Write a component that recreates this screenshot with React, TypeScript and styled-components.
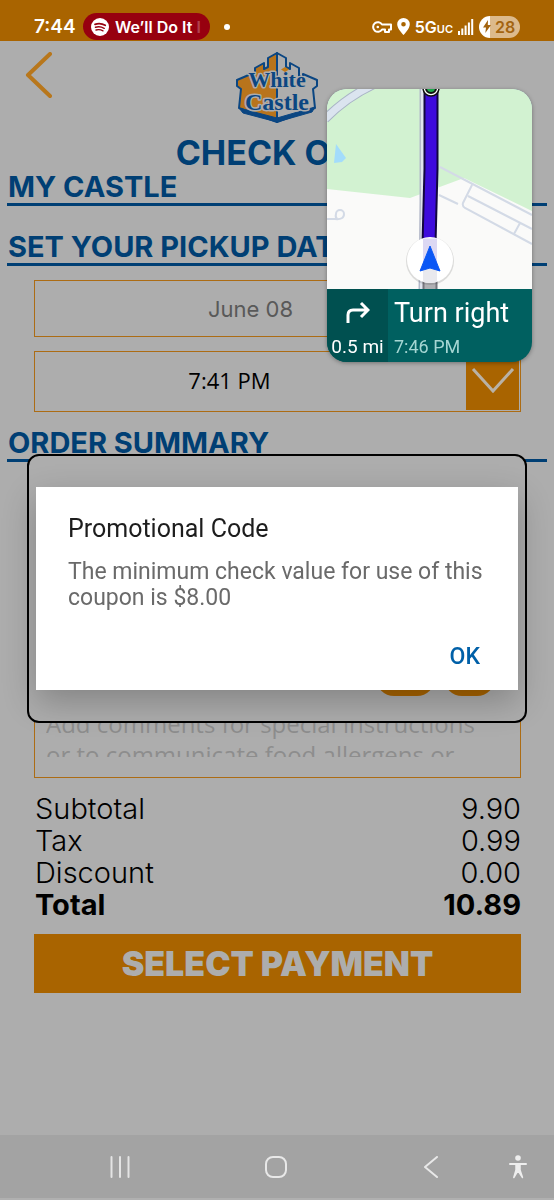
import React from "react";
import styled, { createGlobalStyle } from "styled-components";

const palette = {
  page: "#adadad",
  orange: "#a96400",
  line: "#ac6c14",
  blue: "#003f74",
  ink: "#060606",
};

const GlobalStyle = createGlobalStyle`
  *, *::before, *::after { box-sizing: border-box; }
  body { margin: 0; background: ${palette.page}; font-family: Inter, "Liberation Sans", sans-serif; }
  button, input, select, textarea { font: inherit; margin: 0; border-radius: 0; }
  button { border: 0; padding: 0; background: none; cursor: pointer; }
  svg { display: block; flex: none; }
`;

const Screen = styled.div`
  position: relative;
  display: flex;
  flex-direction: column;
  min-height: 100vh;
  background: ${palette.page};
  color: ${palette.ink};
`;

/* ---------- status bar ---------- */
const StatusBar = styled.div`
  display: flex;
  align-items: center;
  height: 41px;
  padding: 12px 34px 0 34px;
  background: ${palette.orange};
  color: #fff;
`;
const Clock = styled.span`
  width: 49px;
  font-size: 19px;
  line-height: 28px;
  font-weight: 600;
`;
const MediaPill = styled.div`
  display: flex;
  align-items: center;
  gap: 6px;
  width: 127px;
  height: 27px;
  padding-left: 8px;
  border-radius: 14px;
  background: #97000f;
  font-size: 16px;
  font-weight: 600;
  white-space: nowrap;
`;
const Faded = styled.span`
  opacity: 0.25;
`;
const Dot = styled.span`
  width: 6px;
  height: 6px;
  margin-left: 14px;
  border-radius: 50%;
  background: #fff;
`;
const StatusIcons = styled.div`
  display: flex;
  align-items: center;
  gap: 5px;
  margin-left: auto;
`;
const Network = styled.span`
  font-size: 16px;
  font-weight: 600;
  small { font-size: 11px; }
`;
const Battery = styled.span`
  display: flex;
  align-items: center;
  gap: 4px;
  width: 41px;
  height: 22px;
  padding-left: 4px;
  border-radius: 11px;
  background: linear-gradient(90deg, #fff 28%, #dcba8c 28%);
  color: #a36410;
  font-size: 16px;
  font-weight: 600;
`;

/* ---------- page header ---------- */
const Header = styled.header`
  display: grid;
  grid-template-columns: 60px 1fr 60px;
  height: 82px;
  padding-top: 11px;
`;
const BackButton = styled.button`
  display: flex;
  align-items: flex-start;
  padding-left: 25px;
`;
const Brand = styled.div`
  display: flex;
  justify-content: center;
`;
const PageTitle = styled.h1`
  margin: 11px 0 0;
  color: ${palette.blue};
  font-size: 34px;
  line-height: 37px;
  font-weight: 700;
  text-align: center;
`;

/* ---------- form ---------- */
const Main = styled.main`
  display: flex;
  flex: 1;
  flex-direction: column;
`;
const SectionTitle = styled.h2<{ $gap?: number }>`
  margin: ${(p) => p.$gap ?? 0}px 7px 0;
  padding-left: 1px;
  border-bottom: 3px solid ${palette.blue};
  color: ${palette.blue};
  font-size: 29px;
  line-height: 32px;
  font-weight: 700;
  white-space: nowrap;
`;
const Fields = styled.div`
  display: flex;
  flex-direction: column;
  gap: 14px;
  margin: 14px 33px 0 34px;
`;
const DateInput = styled.input`
  width: 100%;
  height: 57px;
  padding: 0 54px 0 0;
  border: 1px solid ${palette.line};
  background: transparent;
  color: #595959;
  font-size: 22px;
  text-align: center;
  outline: none;
`;
const TimeField = styled.div`
  display: flex;
  height: 61px;
  border: 1px solid ${palette.line};
`;
const TimeSelect = styled.select`
  flex: 1;
  min-width: 0;
  padding: 0 42px 3px 0;
  border: 0;
  appearance: none;
  background: transparent;
  color: #000;
  font-family: "Open Sans", sans-serif;
  font-size: 22px;
  text-align: center;
  text-align-last: center;
  outline: none;
`;
const SelectArrow = styled.span`
  display: flex;
  align-items: center;
  justify-content: center;
  width: 53px;
  margin: 0 1px 1px 0;
  background: ${palette.orange};
`;
const OrderArea = styled.div`
  padding: 208px 33px 0 34px;
`;
const CommentBox = styled.div`
  padding: 37px 35px 20px 11px;
  border: 1px solid ${palette.line};
`;
const Comments = styled.textarea`
  display: block;
  width: 100%;
  height: 49px;
  padding: 0;
  border: 0;
  overflow: hidden;
  resize: none;
  background: transparent;
  font-family: "Open Sans", sans-serif;
  font-size: 24px;
  line-height: 31px;
  outline: none;
  &::placeholder { color: #8d8d8d; opacity: 1; }
`;
const Totals = styled.dl`
  margin: 15px 33px 0 35px;
`;
const TotalRow = styled.div<{ $strong?: boolean }>`
  display: flex;
  justify-content: space-between;
  font-size: 29px;
  line-height: 32px;
  font-weight: ${(p) => (p.$strong ? 700 : 300)};
  color: #000;
  dt, dd { margin: 0; }
`;
const PayButton = styled.button`
  height: 59px;
  margin: 13px 33px 0 34px;
  background: ${palette.orange};
  color: ${palette.page};
  font-size: 34px;
  font-weight: 900;
`;

/* ---------- dialog ---------- */
const Scrim = styled.div`
  position: fixed;
  inset: 0;
  display: flex;
  align-items: center;
  justify-content: center;
  padding: 0 27px 23px;
`;
const DialogFrame = styled.div`
  position: relative;
  width: 100%;
  padding: 31px 7px;
  border: 2px solid #000;
  border-radius: 12px;
  background: ${palette.page};
`;
const Quantity = styled.div`
  position: absolute;
  right: 30px;
  bottom: 25px;
  display: flex;
  gap: 9px;
`;
const QuantityPill = styled.span<{ $width: number }>`
  width: ${(p) => p.$width}px;
  height: 36px;
  border-radius: 18px;
  background: #a96400;
`;
const Dialog = styled.div`
  position: relative;
  display: flex;
  flex-direction: column;
  min-height: 203px;
  padding: 26px 32px 15px;
  background: #fff;
  box-shadow: 0 12px 32px rgba(0, 0, 0, 0.24);
  font-family: Roboto, sans-serif;
`;
const DialogTitle = styled.h2`
  margin: 0;
  color: #1d1d1d;
  font-size: 25px;
  line-height: 32px;
  font-weight: 400;
`;
const DialogText = styled.p`
  margin: 14px 0 0;
  color: #6a6a6a;
  font-size: 23px;
  line-height: 26px;
`;
const OkButton = styled.button`
  align-self: flex-end;
  margin-top: auto;
  padding: 0 6px;
  color: #0060a8;
  font-size: 23px;
  line-height: 36px;
  font-weight: 500;
`;

/* ---------- floating navigation card ---------- */
const NavCard = styled.aside`
  position: absolute;
  top: 89px;
  right: 22px;
  width: 205px;
  overflow: hidden;
  border-radius: 20px;
  background: #006060;
  box-shadow: 0 1px 4px rgba(0, 0, 0, 0.35);
  color: #fff;
  font-family: Roboto, sans-serif;
`;
const Guidance = styled.div`
  display: flex;
  height: 73px;
`;
const Maneuver = styled.div`
  display: flex;
  flex-direction: column;
  align-items: center;
  justify-content: space-between;
  width: 61px;
  padding: 11px 0 3px;
  background: #005050;
  font-size: 19px;
  line-height: 24px;
  white-space: nowrap;
`;
const Instruction = styled.div`
  display: flex;
  flex-direction: column;
  justify-content: space-between;
  padding: 8px 0 3px 6px;
  font-size: 27px;
  line-height: 32px;
  white-space: nowrap;
`;
const Eta = styled.span`
  color: #a5d6d3;
  font-size: 18px;
  line-height: 24px;
`;

/* ---------- system navigation ---------- */
const SystemBar = styled.nav`
  display: flex;
  align-items: center;
  height: 65px;
  padding: 0 16px 0 100px;
  border-bottom: 2px solid #b0b0b0;
  background: #a3a3a3;
`;
const SystemKeys = styled.div`
  display: flex;
  flex: 1;
  justify-content: space-between;
  margin-right: 47px;
`;
const SystemButton = styled.button`
  display: flex;
  align-items: center;
  justify-content: center;
  width: 40px;
  height: 40px;
`;

const MusicIcon = () => (
  <svg width="18" height="18" viewBox="0 0 18 18" fill="none" stroke="#97000f" strokeLinecap="round">
    <circle cx="9" cy="9" r="9" fill="#fff" stroke="none" />
    <path d="M4 6.3c3.300-1 7.200-.7 10.200 1" strokeWidth="1.800" />
    <path d="M4.500 9.300c2.900-.8 5.900-.5 8.700 1" strokeWidth="1.500" />
    <path d="M5 12c2.500-.6 4.800-.4 7 .9" strokeWidth="1.300" />
  </svg>
);

const KeyIcon = () => (
  <svg width="20" height="14" viewBox="0 0 20 14" fill="none" stroke="#fff" strokeWidth="2" strokeLinejoin="round">
    <path d="M10 4.500a4.800 4.800 0 1 0 0 5h3V12h4V9.500h2v-5z" />
    <circle cx="5.800" cy="7" r="1.300" fill="#fff" stroke="none" />
  </svg>
);

const PinIcon = () => (
  <svg width="13" height="17" viewBox="0 0 13 17">
    <path fillRule="evenodd" fill="#fff" d="M6.500 0A6.300 6.300 0 0 0 .2 6.300C.2 11 6.500 17 6.500 17s6.300-6 6.300-10.700A6.300 6.300 0 0 0 6.500 0zm0 4a2.300 2.300 0 1 1 0 4.600 2.300 2.300 0 0 1 0-4.600z" />
  </svg>
);

const SignalIcon = () => (
  <svg width="16" height="16" viewBox="0 0 16 16" fill="#fff">
    <rect x="0" y="12" width="2" height="4" />
    <rect x="3.300" y="9.500" width="2" height="6.500" />
    <rect x="6.600" y="6.500" width="2" height="9.500" />
    <rect x="9.900" y="3.500" width="2" height="12.500" />
    <rect x="13.200" y="0" width="2" height="16" />
  </svg>
);

const BoltIcon = () => (
  <svg width="8" height="13" viewBox="0 0 8 13">
    <path d="M5 0L0 7.500h3L2.300 13 8 5H4.800z" fill="#a36410" />
  </svg>
);

const CastleLogo = () => (
  <svg width="84" height="71" viewBox="0 0 84 71" role="img" aria-label="White Castle">
    <g stroke="#0b4682" strokeWidth="2" strokeLinejoin="round">
      <path d="M42 1l-9 5v9l-4 2v-6l-9 5v8l-4 2v-4L2 28v6l4 3-2 19 38 14z" fill="#b8741c" />
      <path d="M42 1l9 5v9l4 2v-6l9 5v8l4 2v-4l14 6v6l-4 3 2 19-38 14z" fill="#adadad" />
      <path d="M4 56l38 10 38-11-3 5-35 10L8 61z" fill="#0b4682" strokeWidth="1" />
    </g>
    <g fontFamily="'Liberation Serif', serif" fontWeight="700" textAnchor="middle" fill="#0b4682" stroke="#adadad" strokeWidth="3" paintOrder="stroke" strokeLinejoin="round">
      <text x="42" y="35" fontSize="22">White</text>
      <text x="42" y="58" fontSize="24">Castle</text>
    </g>
    <path d="M50 15l4 2.500-4 2.500-4-2.500z" fill="#c07a18" />
  </svg>
);

const RouteMap = () => (
  <svg width="100%" height="200" viewBox="0 0 205 200" preserveAspectRatio="xMidYMid slice" role="img" aria-label="Route map">
    <rect width="205" height="200" fill="#fafaf9" />
    <path d="M0 0h205v122l-68-33-54 20L0 100z" fill="#d2f2d1" />
    <path d="M-2 30Q20 8 46-4" fill="none" stroke="#a9b4c6" strokeWidth="9" />
    <path d="M-2 30Q20 8 46-4" fill="none" stroke="#dbe4ef" strokeWidth="7" />
    <path d="M9 55l10 14-4 4-8 1z" fill="#a3dcfb" />
    <g fill="none" stroke="#d3dae6" strokeWidth="2">
      <path d="M113 78l92 48M145 96l-9 18q-1 3 2 5l67 36M141 107l64 33M193 134l-6 11M112 106l19 9" />
      <path d="M0 130h8q9 1 9-5a4 4 0 0 0-8 0q-1 3 1 5" />
    </g>
    <path d="M99 0v112l-1 88" fill="none" stroke="#b3b8c9" strokeWidth="13" />
    <path d="M99 0v112l-1 88" fill="none" stroke="#e0e4ee" strokeWidth="10" />
    <path d="M103 150v50" stroke="#77777f" strokeWidth="15" />
    <path d="M103 150v50" stroke="#b0b0b4" strokeWidth="11" />
    <path d="M104 0v80l-2 75" fill="none" stroke="#12063f" strokeWidth="15" />
    <path d="M104 0v80l-2 75" fill="none" stroke="#3d0bdc" strokeWidth="11" />
    <circle cx="104" cy="-1" r="8" fill="#fff" stroke="#111" strokeWidth="1.500" />
    <circle cx="104" cy="-1" r="5" fill="#1fa94c" stroke="#111" strokeWidth="2" />
    <circle cx="103" cy="172" r="24" fill="#000" opacity="0.120" />
    <circle cx="103" cy="171" r="23" fill="#fff" />
    <path d="M96 149.500h14v43H96z" fill="#dcd8f3" />
    <path d="M96 174h14v19q-7 2-14 0z" fill="#e9e9ee" />
    <path d="M103 157l10 25-10-3-10 3z" fill="#0b57f5" stroke="#0b57f5" strokeLinejoin="round" />
  </svg>
);

const TurnRightIcon = () => (
  <svg width="24" height="24" viewBox="0 0 24 24" fill="none" stroke="#fff" strokeWidth="3">
    <path d="M2 23v-8q0-5 5-5h14M15 3l7 7-7 7" />
  </svg>
);

const totals = [
  { label: "Subtotal", value: "9.90" },
  { label: "Tax", value: "0.99" },
  { label: "Discount", value: "0.00" },
  { label: "Total", value: "10.89", strong: true },
];

export default function App() {
  return (
    <>
      <GlobalStyle />
      <Screen>
        <StatusBar>
          <Clock>7:44</Clock>
          <MediaPill>
            <MusicIcon />
            <span>We’ll Do It <Faded>I</Faded></span>
          </MediaPill>
          <Dot />
          <StatusIcons>
            <KeyIcon />
            <PinIcon />
            <Network>5G<small>UC</small></Network>
            <SignalIcon />
            <Battery><BoltIcon />28</Battery>
          </StatusIcons>
        </StatusBar>

        <Header>
          <BackButton aria-label="Back">
            <svg width="28" height="48" viewBox="0 0 28 48" fill="none" stroke="#b8771c" strokeWidth="4" strokeLinecap="round" strokeLinejoin="round">
              <path d="M25 2L3 23l22 21" />
            </svg>
          </BackButton>
          <Brand><CastleLogo /></Brand>
        </Header>

        <Main>
          <PageTitle>CHECK OUT</PageTitle>
          <SectionTitle>MY CASTLE</SectionTitle>
          <SectionTitle $gap={25}>SET YOUR PICKUP DATE</SectionTitle>
          <Fields>
            <DateInput aria-label="Pickup date" defaultValue="June 08" />
            <TimeField>
              <TimeSelect aria-label="Pickup time" defaultValue="7:41 PM">
                <option>7:41 PM</option>
              </TimeSelect>
              <SelectArrow>
                <svg width="44" height="28" viewBox="0 0 44 28" fill="none" stroke="#b9b2a6" strokeWidth="3">
                  <path d="M2 2l20 22L42 2" />
                </svg>
              </SelectArrow>
            </TimeField>
          </Fields>

          <SectionTitle $gap={15}>ORDER SUMMARY</SectionTitle>
          <OrderArea>
            <CommentBox>
              <Comments
                aria-label="Comments"
                placeholder="Add comments for special instructions or to communicate food allergens or"
              />
            </CommentBox>
          </OrderArea>

          <Totals>
            {totals.map((t) => (
              <TotalRow key={t.label} $strong={t.strong}>
                <dt>{t.label}</dt>
                <dd>{t.value}</dd>
              </TotalRow>
            ))}
          </Totals>
          <PayButton>SELECT PAYMENT</PayButton>
        </Main>

        <SystemBar>
          <SystemKeys>
            <SystemButton aria-label="Recent apps">
              <svg width="20" height="22" viewBox="0 0 20 22" stroke="#e4e4e4" strokeWidth="2" strokeLinecap="round">
                <path d="M1.500 1v20M10 1v20M18.500 1v20" />
              </svg>
            </SystemButton>
            <SystemButton aria-label="Home">
              <svg width="22" height="22" viewBox="0 0 22 22" fill="none" stroke="#e8e8e8" strokeWidth="2">
                <rect x="1" y="1" width="20" height="20" rx="7" />
              </svg>
            </SystemButton>
            <SystemButton aria-label="Go back">
              <svg width="14" height="22" viewBox="0 0 14 22" fill="none" stroke="#e8e8e8" strokeWidth="2" strokeLinecap="round" strokeLinejoin="round">
                <path d="M13 1L1 11l12 10" />
              </svg>
            </SystemButton>
          </SystemKeys>
          <SystemButton aria-label="Accessibility">
            <svg width="18" height="24" viewBox="0 0 18 24" fill="none" stroke="#eee" strokeLinecap="round" strokeLinejoin="round">
              <circle cx="9" cy="3" r="2.800" fill="#eee" stroke="none" />
              <path d="M1 9h16" strokeWidth="2" />
              <path d="M7 10h4v5l2.500 7.500L9 15.500 4.800 22.500 7 15z" fill="#eee" strokeWidth="1.500" />
            </svg>
          </SystemButton>
        </SystemBar>

        <Scrim>
          <DialogFrame>
            <Quantity>
              <QuantityPill $width={59} />
              <QuantityPill $width={51} />
            </Quantity>
            <Dialog role="alertdialog" aria-labelledby="promo-title" aria-describedby="promo-text">
              <DialogTitle id="promo-title">Promotional Code</DialogTitle>
              <DialogText id="promo-text">
                The minimum check value for use of this coupon is $8.00
              </DialogText>
              <OkButton>OK</OkButton>
            </Dialog>
          </DialogFrame>
        </Scrim>

        <NavCard>
          <RouteMap />
          <Guidance>
            <Maneuver>
              <TurnRightIcon />
              0.5 mi
            </Maneuver>
            <Instruction>
              Turn right
              <Eta>7:46 PM</Eta>
            </Instruction>
          </Guidance>
        </NavCard>
      </Screen>
    </>
  );
}
